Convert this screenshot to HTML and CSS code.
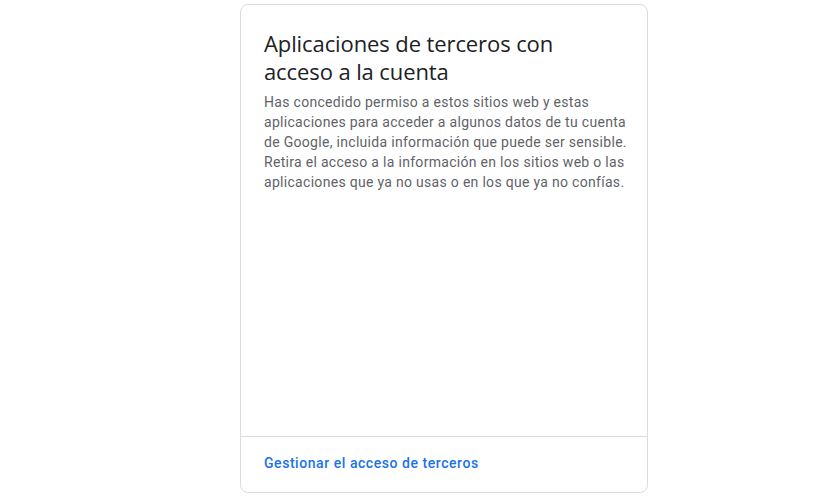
FILE: index.html
```html
<!DOCTYPE html>
<html lang="es">

<head>
    <meta charset="UTF-8">
    <meta name="viewport" content="width=device-width, initial-scale=1.0">
    <title>Aplicaciones de terceros</title>
    <link rel="stylesheet" href="styles.css">
</head>

<body>
    <!-- Third-party access card -->
    <div class="page">
        <div class="card">
            <div class="card-body">
                <h2>Aplicaciones de terceros con acceso a la cuenta</h2>
                <p>Has concedido permiso a estos sitios web y estas aplicaciones para acceder a algunos datos de tu cuenta de Google, incluida información que puede ser sensible. Retira el acceso a la información en los sitios web o las aplicaciones que ya no usas o en los que ya no confías.</p>
            </div>
            <div class="card-footer">
                <a href="#">Gestionar el acceso de terceros</a>
            </div>
        </div>
    </div>
</body>

</html>
```

FILE: styles.css
```css
body {
    font-family: Roboto, 'Liberation Sans', Arial, sans-serif;
    background-color: #fff;
    color: #202124;
    margin: 0;
}

.page {
    padding: 4px 0 0 240px;
}

.card {
    width: 408px;
    height: 489px;
    box-sizing: border-box;
    border: 1px solid #dadce0;
    border-radius: 8px;
    display: flex;
    flex-direction: column;
}

.card-body {
    flex: 1;
    padding: 24px 20px 0 23px;
}

h2 {
    max-width: 340px;
    font-family: 'Open Sans', Roboto, sans-serif;
    font-weight: 400;
    font-size: 22px;
    line-height: 28px;
    letter-spacing: -0.1px;
    color: #202124;
    margin: 0 0 7px;
}

p {
    margin: 0;
    font-size: 14px;
    line-height: 20px;
    color: #5f6368;
    letter-spacing: 0.3px;
}

.card-footer {
    border-top: 1px solid #dadce0;
    padding: 16px 24px 19px 23px;
    line-height: 20px;
}

.card-footer a {
    font-size: 14px;
    font-weight: 500;
    color: #1a73e8;
    text-decoration: none;
    letter-spacing: 0.55px;
}
```
